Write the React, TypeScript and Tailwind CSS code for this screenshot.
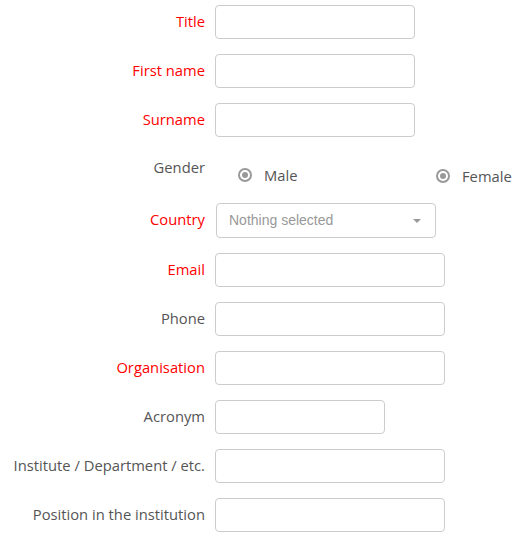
import React from 'react'

type Field = {
  label: string
  required?: boolean
  width: string
}

const before: Field[] = [
  { label: 'Title', required: true, width: 'w-[200px]' },
  { label: 'First name', required: true, width: 'w-[200px]' },
  { label: 'Surname', required: true, width: 'w-[200px]' },
]

const after: Field[] = [
  { label: 'Email', required: true, width: 'w-[230px]' },
  { label: 'Phone', width: 'w-[230px]' },
  { label: 'Organisation', required: true, width: 'w-[230px]' },
  { label: 'Acronym', width: 'w-[170px]' },
  { label: 'Institute / Department / etc.', width: 'w-[230px]' },
  { label: 'Position in the institution', width: 'w-[230px]' },
]

function Label({ text, required }: { text: string; required?: boolean }) {
  return (
    <div className={`w-[205px] shrink-0 pb-[2px] text-right text-[14.75px] ${required ? 'text-[#ff0000]' : 'text-[#555]'}`}>
      {text}
    </div>
  )
}

function Row({ field }: { field: Field }) {
  return (
    <div className="flex items-center gap-[10px]">
      <Label text={field.label} required={field.required} />
      <input
        type="text"
        className={`${field.width} h-[34px] rounded-[4px] border border-[#ccc] bg-white px-3 text-[14px] outline-none`}
      />
    </div>
  )
}

function Radio({ label }: { label: string }) {
  return (
    <label className="flex items-center gap-[12px] text-[14.75px] text-[#555]">
      <span className="flex h-[14px] w-[14px] items-center justify-center rounded-full border-2 border-[#999]">
        <span className="h-[6px] w-[6px] rounded-full bg-[#999]" />
      </span>
      {label}
    </label>
  )
}

export default function App() {
  return (
    <div
      className="flex w-[530px] flex-col gap-[15px] bg-white pt-[5px]"
      style={{ fontFamily: '"Open Sans", sans-serif' }}
    >
      {before.map((f) => (
        <Row key={f.label} field={f} />
      ))}

      {/* Gender */}
      <div className="flex h-[36px] gap-[10px]">
        <div className="w-[205px] shrink-0 pt-[4px] text-right text-[14.75px] text-[#555]">Gender</div>
        <div className="flex pt-[12px] pl-[23px]">
          <div className="w-[198px]">
            <Radio label="Male" />
          </div>
          <Radio label="Female" />
        </div>
      </div>

      {/* Country */}
      <div className="flex items-center gap-[10px]">
        <Label text="Country" required />
        <div className="ml-px flex h-[35px] w-[220px] items-center justify-between rounded-[4px] border border-[#ccc] bg-white pr-[14px] pl-3 font-['Liberation_Sans',sans-serif] text-[14px] text-[#999]">
          <span>Nothing selected</span>
          <span className="h-0 w-0 border-x-[4px] border-t-[4px] border-x-transparent border-t-[#999]" />
        </div>
      </div>

      {after.map((f) => (
        <Row key={f.label} field={f} />
      ))}
    </div>
  )
}
